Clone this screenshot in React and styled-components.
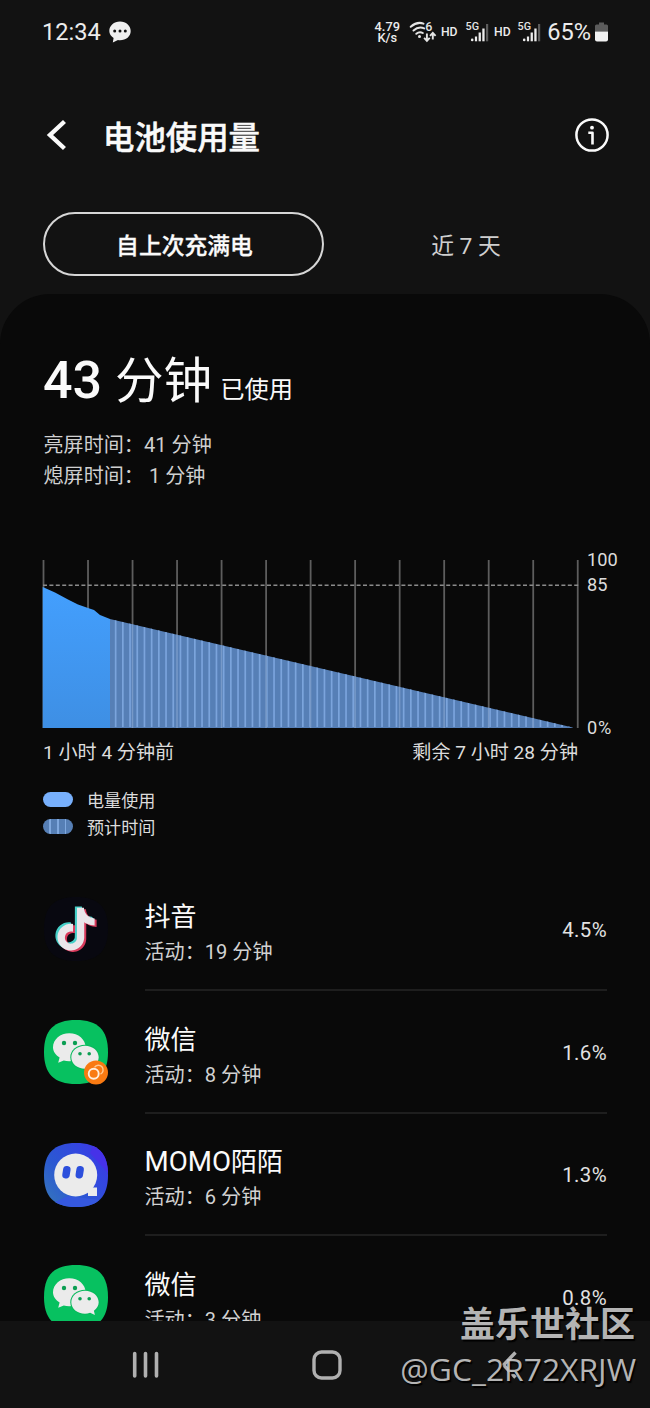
import React from 'react';
import styled, { createGlobalStyle } from 'styled-components';

const GlobalStyle = createGlobalStyle`
  * { box-sizing: border-box; }
  body {
    margin: 0;
    background: #121212;
    font-family: Roboto, "Noto Sans CJK SC", sans-serif;
    color: #fafafa;
  }
  svg { display: block; flex: none; }
`;

const Screen = styled.div`
  position: relative;
  width: 650px;
  height: 1408px;
  display: flex;
  flex-direction: column;
  background: #121212;
  overflow: hidden;
`;

const StatusBar = styled.div`
  height: 64px;
  padding: 0 42px;
  display: flex;
  align-items: center;
  color: #ececec;
`;

const StatusText = styled.span`
  font-size: ${(p) => p.$size}px;
  line-height: 28px;
  margin-left: ${(p) => p.$before || 0}px;
  margin-right: ${(p) => p.$after || 0}px;
  font-weight: ${(p) => p.$weight || 400};
  white-space: nowrap;
`;

const StatusRight = styled.div`
  margin-left: auto;
  display: flex;
  align-items: center;
`;

const NetSpeed = styled.div`
  display: flex;
  flex-direction: column;
  align-items: center;
  margin-right: 10px;
  font-size: 12.8px;
  font-weight: 500;
  line-height: 11px;
`;

const Header = styled.div`
  height: 148px;
  padding: 0 40px 6px 46px;
  display: flex;
  align-items: center;
`;

const Title = styled.h1`
  margin: 8px auto 0 35px;
  font-size: 31.4px;
  line-height: 44px;
  font-weight: 500;
  -webkit-text-stroke: 0.5px currentColor;
`;

const Tabs = styled.div`
  height: 64px;
  margin: 0 42px 0 43px;
  display: flex;
`;

const Tab = styled.div`
  flex: ${(p) => (p.$active ? '0 0 281px' : '1')};
  display: flex;
  align-items: center;
  justify-content: center;
  padding: 5px 0 0 ${(p) => (p.$active ? 2 : 0)}px;
  border: 2px solid ${(p) => (p.$active ? '#d6d6d6' : 'transparent')};
  border-radius: 32px;
  font-size: 22.8px;
  line-height: 30px;
  font-weight: ${(p) => (p.$active ? 500 : 400)};
  -webkit-text-stroke: ${(p) => (p.$active ? '0.3px currentColor' : '0')};
  color: ${(p) => (p.$active ? '#fafafa' : '#cfcfcf')};
`;

const Panel = styled.main`
  flex: 1;
  min-height: 0;
  margin-top: 18px;
  padding: 57px 43px 0;
  overflow: hidden;
  background: #090909;
  border-radius: 50px 50px 0 0;
`;

const UsageHeading = styled.div`
  height: 60px;
  display: flex;
  align-items: baseline;
`;

const UsageNumber = styled.span`
  font-size: 52px;
  line-height: 60px;
  font-weight: 500;
  margin-right: 13px;
`;

const UsageUnit = styled.span`
  font-size: 48.5px;
  line-height: 48px;
  margin-right: 8px;
`;

const UsageNote = styled.span`
  font-size: 24.3px;
  line-height: 24px;
`;

const ScreenTimes = styled.div`
  margin-top: 19px;
  padding-left: 0.5px;
  font-size: 20.1px;
  line-height: 31px;
  color: #d0d0d0;
  white-space: pre;
`;

const ChartRow = styled.div`
  height: 193px;
  margin-top: 55px;
  display: flex;
`;

const Plot = styled.svg`
  margin-top: 13px;
`;

const Scale = styled.div`
  display: flex;
  flex-direction: column;
  margin-left: 7px;
  font-size: 18.2px;
  line-height: 25px;
  color: #dcdcdc;
`;

const ScaleZero = styled.span`
  margin-top: auto;
  letter-spacing: 0.7px;
`;

const TimeAxis = styled.div`
  width: 535px;
  display: flex;
  justify-content: space-between;
  font-size: 19.1px;
  line-height: 25px;
  color: #dcdcdc;
`;

const Legend = styled.div`
  margin-top: 23px;
`;

const LegendItem = styled.div`
  height: 26.5px;
  display: flex;
  align-items: center;
  gap: 14.5px;
  font-size: 17.1px;
  line-height: 26px;
  color: #dcdcdc;
`;

const Swatch = styled.span`
  width: 29.5px;
  height: 15px;
  margin-top: -3px;
  border-radius: 8px;
  background: ${(p) =>
    p.$striped
      ? 'repeating-linear-gradient(90deg, #567fb5 0 6.2px, #7fa8de 6.2px 7.8px)'
      : '#78b0fc'};
`;

const AppList = styled.div`
  margin-top: 27px;
`;

const AppRow = styled.div`
  height: 122.75px;
  display: flex;
  align-items: stretch;
`;

const AppIcon = styled.svg`
  margin: 29px 36.5px 0 1px;
`;

const AppBody = styled.div`
  flex: 1;
  display: flex;
  align-items: center;
  justify-content: space-between;
  border-bottom: 2px solid #1e1e1e;
`;

const AppText = styled.div`
  display: flex;
  flex-direction: column;
  padding-top: 11px;
`;

const AppName = styled.span`
  font-size: 26px;
  line-height: 36px;
`;

const LatinName = styled.span`
  font-size: 27.7px;
  line-height: 1;
`;

const AppActivity = styled.span`
  font-size: 20.1px;
  line-height: 34px;
  color: #d2d2d2;
`;

const AppShare = styled.span`
  font-size: 20.4px;
  line-height: 28px;
  padding-top: 3px;
  letter-spacing: 0.4px;
  color: #e2e2e2;
`;

const NavBar = styled.nav`
  height: 87px;
  flex: none;
  padding: 0 132px 0 131px;
  display: flex;
  align-items: center;
  justify-content: space-between;
  background: #121212;
`;

const HomeIcon = styled.svg`
  margin: 0 7px 0 0;
`;

const Watermark = styled.div`
  position: absolute;
  right: 14px;
  bottom: 18px;
  display: flex;
  flex-direction: column;
  align-items: flex-end;
  color: rgba(205, 205, 205, 0.88);
  text-shadow: 1.5px 1.5px 1px #000;
  white-space: nowrap;
`;

const WatermarkTitle = styled.span`
  font-size: 35px;
  line-height: 44px;
  font-weight: 700;
  margin-right: 1px;
`;

const WatermarkUser = styled.span`
  font-family: "Open Sans", sans-serif;
  font-size: 31.8px;
  line-height: 42px;
`;

const SQUIRCLE =
  'M32 0C54 0 64 10 64 32C64 54 54 64 32 64C10 64 0 54 0 32C0 10 10 0 32 0Z';

const NOTE =
  'M12.525.02c1.31-.02 2.61-.01 3.91-.02.08 1.53.63 3.09 1.75 4.17 1.12 1.11 2.7 1.62 4.24 1.79v4.03c-1.44-.05-2.89-.35-4.2-.97-.57-.26-1.1-.59-1.62-.93-.01 2.92.01 5.84-.02 8.75-.08 1.4-.54 2.79-1.35 3.94-1.31 1.92-3.58 3.17-5.91 3.21-1.43.08-2.86-.31-4.08-1.03-2.02-1.19-3.44-3.37-3.65-5.71-.02-.5-.03-1-.01-1.49.18-1.9 1.12-3.72 2.58-4.96 1.66-1.44 3.98-2.13 6.15-1.72.02 1.48-.04 2.96-.04 4.44-.99-.32-2.15-.23-3.02.37-.63.41-1.11 1.04-1.36 1.75-.21.51-.15 1.07-.14 1.61.24 1.64 1.82 3.02 3.5 2.87 1.12-.01 2.19-.66 2.77-1.61.19-.33.4-.67.41-1.06.1-1.79.06-3.57.07-5.36.01-4.03-.01-8.05.02-12.07z';

function DouyinIcon() {
  return (
    <AppIcon width="64" height="64" viewBox="0 0 64 64">
      <path d={SQUIRCLE} fill="#080810" />
      <path d={NOTE} fill="#45cfc8" transform="translate(8.6 9.4) scale(1.78)" />
      <path d={NOTE} fill="#d83a5c" transform="translate(12.7 12.2) scale(1.78)" />
      <path d={NOTE} fill="#e9e6ea" transform="translate(10.7 10.8) scale(1.78)" />
    </AppIcon>
  );
}

function WeChatIcon({ dual }) {
  return (
    <AppIcon width="64" height="64" viewBox="0 0 64 64" overflow="visible">
      <path d={SQUIRCLE} fill="#07c160" />
      <path d="M25.3 13.3c9 0 16.3 6.2 16.3 14s-7.3 14-16.3 14c-2 0-3.8-.3-5.5-.8l-5.6 2.3 1.4-5.2c-4-2.5-6.6-6.2-6.6-10.3 0-7.8 7.3-14 16.3-14z" fill="#ebebeb" />
      <ellipse cx="41" cy="37.2" rx="14.7" ry="12.5" fill="#07b95b" />
      <path d="M41 25.7c7.6 0 13.7 5.1 13.7 11.5 0 3.5-2 6.4-4.8 8.5l1 4.2-4.8-2.1c-1.6.6-3.3.9-5.1.9-7.6 0-13.7-5.1-13.7-11.5s6.1-11.5 13.7-11.5z" fill="#ebebeb" />
      <g fill="#0b9e52">
        <circle cx="20" cy="23" r="2.2" />
        <circle cx="31" cy="23" r="2.2" />
        <circle cx="36" cy="33.7" r="1.8" />
        <circle cx="45.2" cy="33.7" r="1.8" />
      </g>
      {dual && (
        <g>
          <circle cx="52" cy="52.4" r="12" fill="#f97a12" />
          <circle cx="49.7" cy="53.8" r="5" fill="none" stroke="#ffeedd" strokeWidth="1.9" />
          <path d="M50.5 47.3a4.7 4.7 0 1 1 6 6.8" fill="none" stroke="#ffc890" strokeWidth="1.5" />
        </g>
      )}
    </AppIcon>
  );
}

function MomoIcon() {
  return (
    <AppIcon width="64" height="64" viewBox="0 0 64 64">
      <defs>
        <linearGradient id="momo" x1="0" y1="0.85" x2="1" y2="0.1">
          <stop offset="0" stopColor="#3574bd" />
          <stop offset="0.35" stopColor="#2b58d2" />
          <stop offset="0.7" stopColor="#3347e0" />
          <stop offset="1" stopColor="#4034e6" />
        </linearGradient>
        <clipPath id="momoClip"><path d={SQUIRCLE} /></clipPath>
      </defs>
      <g clipPath="url(#momoClip)">
        <rect width="64" height="64" fill="url(#momo)" />
        <path d="M0 64L24 53L64 58V64Z" fill="#3558de" />
        <path d="M50 0L64 10V30L46 10Z" fill="#4632e8" />
        <circle cx="31.7" cy="32" r="21.5" fill="#ebebeb" />
        <path d="M44 44.5h9V53h-9z" fill="#ebebeb" />
        <rect x="18.7" y="23" width="7.5" height="12.5" rx="3.7" fill="#2c4fdc" transform="rotate(9 22.5 29)" />
        <rect x="32" y="23" width="7.5" height="12.5" rx="3.7" fill="#2c4fdc" transform="rotate(9 35.7 29)" />
      </g>
    </AppIcon>
  );
}

function ChatIcon() {
  return (
    <svg width="22" height="22" viewBox="0 0 22 22">
      <path d="M11 .5C17 .5 21.7 4.7 21.7 10S17 19.3 11 19.3c-.7 0-1.4 0-2-.2L3.8 21.5 4.6 17C2 15.3.3 12.8.3 10 .3 4.7 5 .5 11 .5z" fill="#efefef" />
      <g fill="#121212">
        <circle cx="5.7" cy="10" r="1.5" />
        <circle cx="11" cy="10" r="1.5" />
        <circle cx="16.3" cy="10" r="1.5" />
      </g>
    </svg>
  );
}

function WifiIcon() {
  return (
    <svg width="27" height="22" viewBox="0 0 27 22" overflow="visible">
      <g fill="none" stroke="#e4e4e4" strokeWidth="2" strokeLinecap="round">
        <path d="M0.7 5.8Q7 .2 13.5 2.6" />
        <path d="M3.5 9.5Q8.500 5 14.2 7.400" />
        <path d="M6.3 12.8Q9.500 10 12.8 12" />
      </g>
      <circle cx="9.5" cy="15.5" r="1.5" fill="#e4e4e4" />
      <text x="15.3" y="9.5" fontSize="12.5" fontWeight="500" fill="#e4e4e4">6</text>
      <g fill="none" stroke="#e4e4e4" strokeWidth="1.9">
        <path d="M16.9 12.5v7.2M14.1 16.9l2.800 2.900 2.800-2.900" />
        <path d="M22.8 18.5v-6.500M20 14.8l2.800-2.900 2.800 2.900" />
      </g>
    </svg>
  );
}

function SignalIcon() {
  return (
    <svg width="24" height="22" viewBox="0 0 24 22" overflow="visible">
      <text x="-0.4" y="8.7" fontSize="10.8" fontWeight="500" fill="#e4e4e4">5G</text>
      <g fill="#ececec">
        <circle cx="6.2" cy="18.9" r="1.3" />
        <rect x="8.9" y="15.5" width="2.2" height="4.8" />
        <rect x="12.6" y="11.5" width="2.3" height="8.8" />
        <rect x="16.3" y="7.5" width="2.3" height="12.8" />
      </g>
      <rect x="20" y="3" width="2.2" height="17.3" fill="#5c5c5c" />
    </svg>
  );
}

function BatteryIcon() {
  return (
    <svg width="13" height="20" viewBox="0 0 13 20">
      <path d="M4 .5h5v2h2.5Q13 2.5 13 4v5.5H0V4q0-1.5 1.5-1.5H4z" fill="#5c5c5c" />
      <path d="M0 9.5h13v8q0 2-2 2H2q-2 0-2-2z" fill="#f2f2f2" />
    </svg>
  );
}

const GRID = Array.from({ length: 13 }, (_, i) => 0.5 + i * 44.52);
const STRIPES = Array.from({ length: 64 }, (_, i) => 71.8 + i * 7.2);

function BatteryChart() {
  return (
    <Plot width="537" height="168" viewBox="0 0 537 168" overflow="visible">
      <defs>
        <linearGradient id="used" x1="0" y1="0" x2="0" y2="1">
          <stop offset="0" stopColor="#439ffe" />
          <stop offset="1" stopColor="#3e8fe4" />
        </linearGradient>
        <clipPath id="forecast">
          <path d="M67 59L529.7 167.5V168H67Z" />
        </clipPath>
      </defs>
      {GRID.map((x) => (
        <rect key={x} x={x - 0.9} y="0" width="1.8" height="168" fill="#5d5d5d" />
      ))}
      <path d="M0 25.2H536" stroke="#8b8b8b" strokeWidth="1.6" strokeDasharray="4 2.4" />
      <g clipPath="url(#forecast)">
        <rect x="67" y="59" width="464" height="109" fill="#567fb6" />
        {STRIPES.map((x) => (
          <rect key={x} x={x} y="59" width="1.7" height="108" fill="#7ba4dc" />
        ))}
        {GRID.map((x) => (
          <rect key={x} x={x - 0.8} y="59" width="1.5" height="109" fill="#7799c8" />
        ))}
      </g>
      <path
        d="M-0.3 27L12 32.5L25 39.5L35 44.5L45 48L51 50L57 55L67 59V168H-0.3Z"
        fill="url(#used)"
      />
    </Plot>
  );
}

const APPS = [
  { name: '抖音', time: '19', share: '4.5%', icon: <DouyinIcon /> },
  { name: '微信', time: '8', share: '1.6%', icon: <WeChatIcon dual /> },
  { latin: 'MOMO', name: '陌陌', time: '6', share: '1.3%', icon: <MomoIcon /> },
  { name: '微信', time: '3', share: '0.8%', icon: <WeChatIcon /> },
];

export default function App() {
  return (
    <Screen>
      <GlobalStyle />
      <StatusBar>
        <StatusText $size={23.6} $after={8}>12:34</StatusText>
        <ChatIcon />
        <StatusRight>
          <NetSpeed>
            <span>4.79</span>
            <span>K/s</span>
          </NetSpeed>
          <WifiIcon />
          <StatusText $size={12.2} $weight={500} $before={4} $after={8}>HD</StatusText>
          <SignalIcon />
          <StatusText $size={12.2} $weight={500} $before={4.5} $after={7.5}>HD</StatusText>
          <SignalIcon />
          <StatusText $size={23.6} $before={5} $after={4}>65%</StatusText>
          <BatteryIcon />
        </StatusRight>
      </StatusBar>

      <Header>
        <svg width="22" height="32" viewBox="0 0 22 32">
          <path d="M18.5 2.5L4 16L18.5 29.5" fill="none" stroke="#fafafa" strokeWidth="4.4" />
        </svg>
        <Title>电池使用量</Title>
        <svg width="36" height="36" viewBox="0 0 36 36">
          <circle cx="18" cy="18" r="15.6" fill="none" stroke="#fafafa" strokeWidth="2.5" />
          <circle cx="18" cy="10.7" r="1.9" fill="#fafafa" />
          <path d="M14.3 15.7H18.5V27.5" fill="none" stroke="#fafafa" strokeWidth="2.6" strokeLinejoin="round" />
        </svg>
      </Header>

      <Tabs>
        <Tab $active>自上次充满电</Tab>
        <Tab>近 7 天</Tab>
      </Tabs>

      <Panel>
        <UsageHeading>
          <UsageNumber>43</UsageNumber>
          <UsageUnit>分钟</UsageUnit>
          <UsageNote>已使用</UsageNote>
        </UsageHeading>
        <ScreenTimes>
          <div>亮屏时间：41 分钟</div>
          <div>熄屏时间： 1 分钟</div>
        </ScreenTimes>

        <ChartRow>
          <BatteryChart />
          <Scale>
            <span>100</span>
            <span>85</span>
            <ScaleZero>0%</ScaleZero>
          </Scale>
        </ChartRow>
        <TimeAxis>
          <span>1 小时 4 分钟前</span>
          <span>剩余 7 小时 28 分钟</span>
        </TimeAxis>

        <Legend>
          <LegendItem><Swatch />电量使用</LegendItem>
          <LegendItem><Swatch $striped />预计时间</LegendItem>
        </Legend>

        <AppList>
          {APPS.map((app, i) => (
            <AppRow key={i}>
              {app.icon}
              <AppBody>
                <AppText>
                  <AppName>
                    {app.latin && <LatinName>{app.latin}</LatinName>}
                    {app.name}
                  </AppName>
                  <AppActivity>活动：{app.time} 分钟</AppActivity>
                </AppText>
                <AppShare>{app.share}</AppShare>
              </AppBody>
            </AppRow>
          ))}
        </AppList>
      </Panel>

      <NavBar>
        <svg width="29" height="30" viewBox="0 0 29 30">
          <path d="M3.7 3.5V26M14.5 3.5V26M25.5 3.5V26" stroke="#b0b0b0" strokeWidth="3.6" strokeLinecap="round" />
        </svg>
        <HomeIcon width="30" height="30" viewBox="0 0 30 30">
          <rect x="2" y="2" width="26" height="26" rx="7.5" fill="none" stroke="#b0b0b0" strokeWidth="3.4" />
        </HomeIcon>
        <svg width="18" height="30" viewBox="0 0 18 30">
          <path d="M15.5 2.5L3.5 15L15.5 27.5" fill="none" stroke="#b0b0b0" strokeWidth="3.4" />
        </svg>
      </NavBar>

      <Watermark>
        <WatermarkTitle>盖乐世社区</WatermarkTitle>
        <WatermarkUser>@GC_2R72XRJW</WatermarkUser>
      </Watermark>
    </Screen>
  );
}
